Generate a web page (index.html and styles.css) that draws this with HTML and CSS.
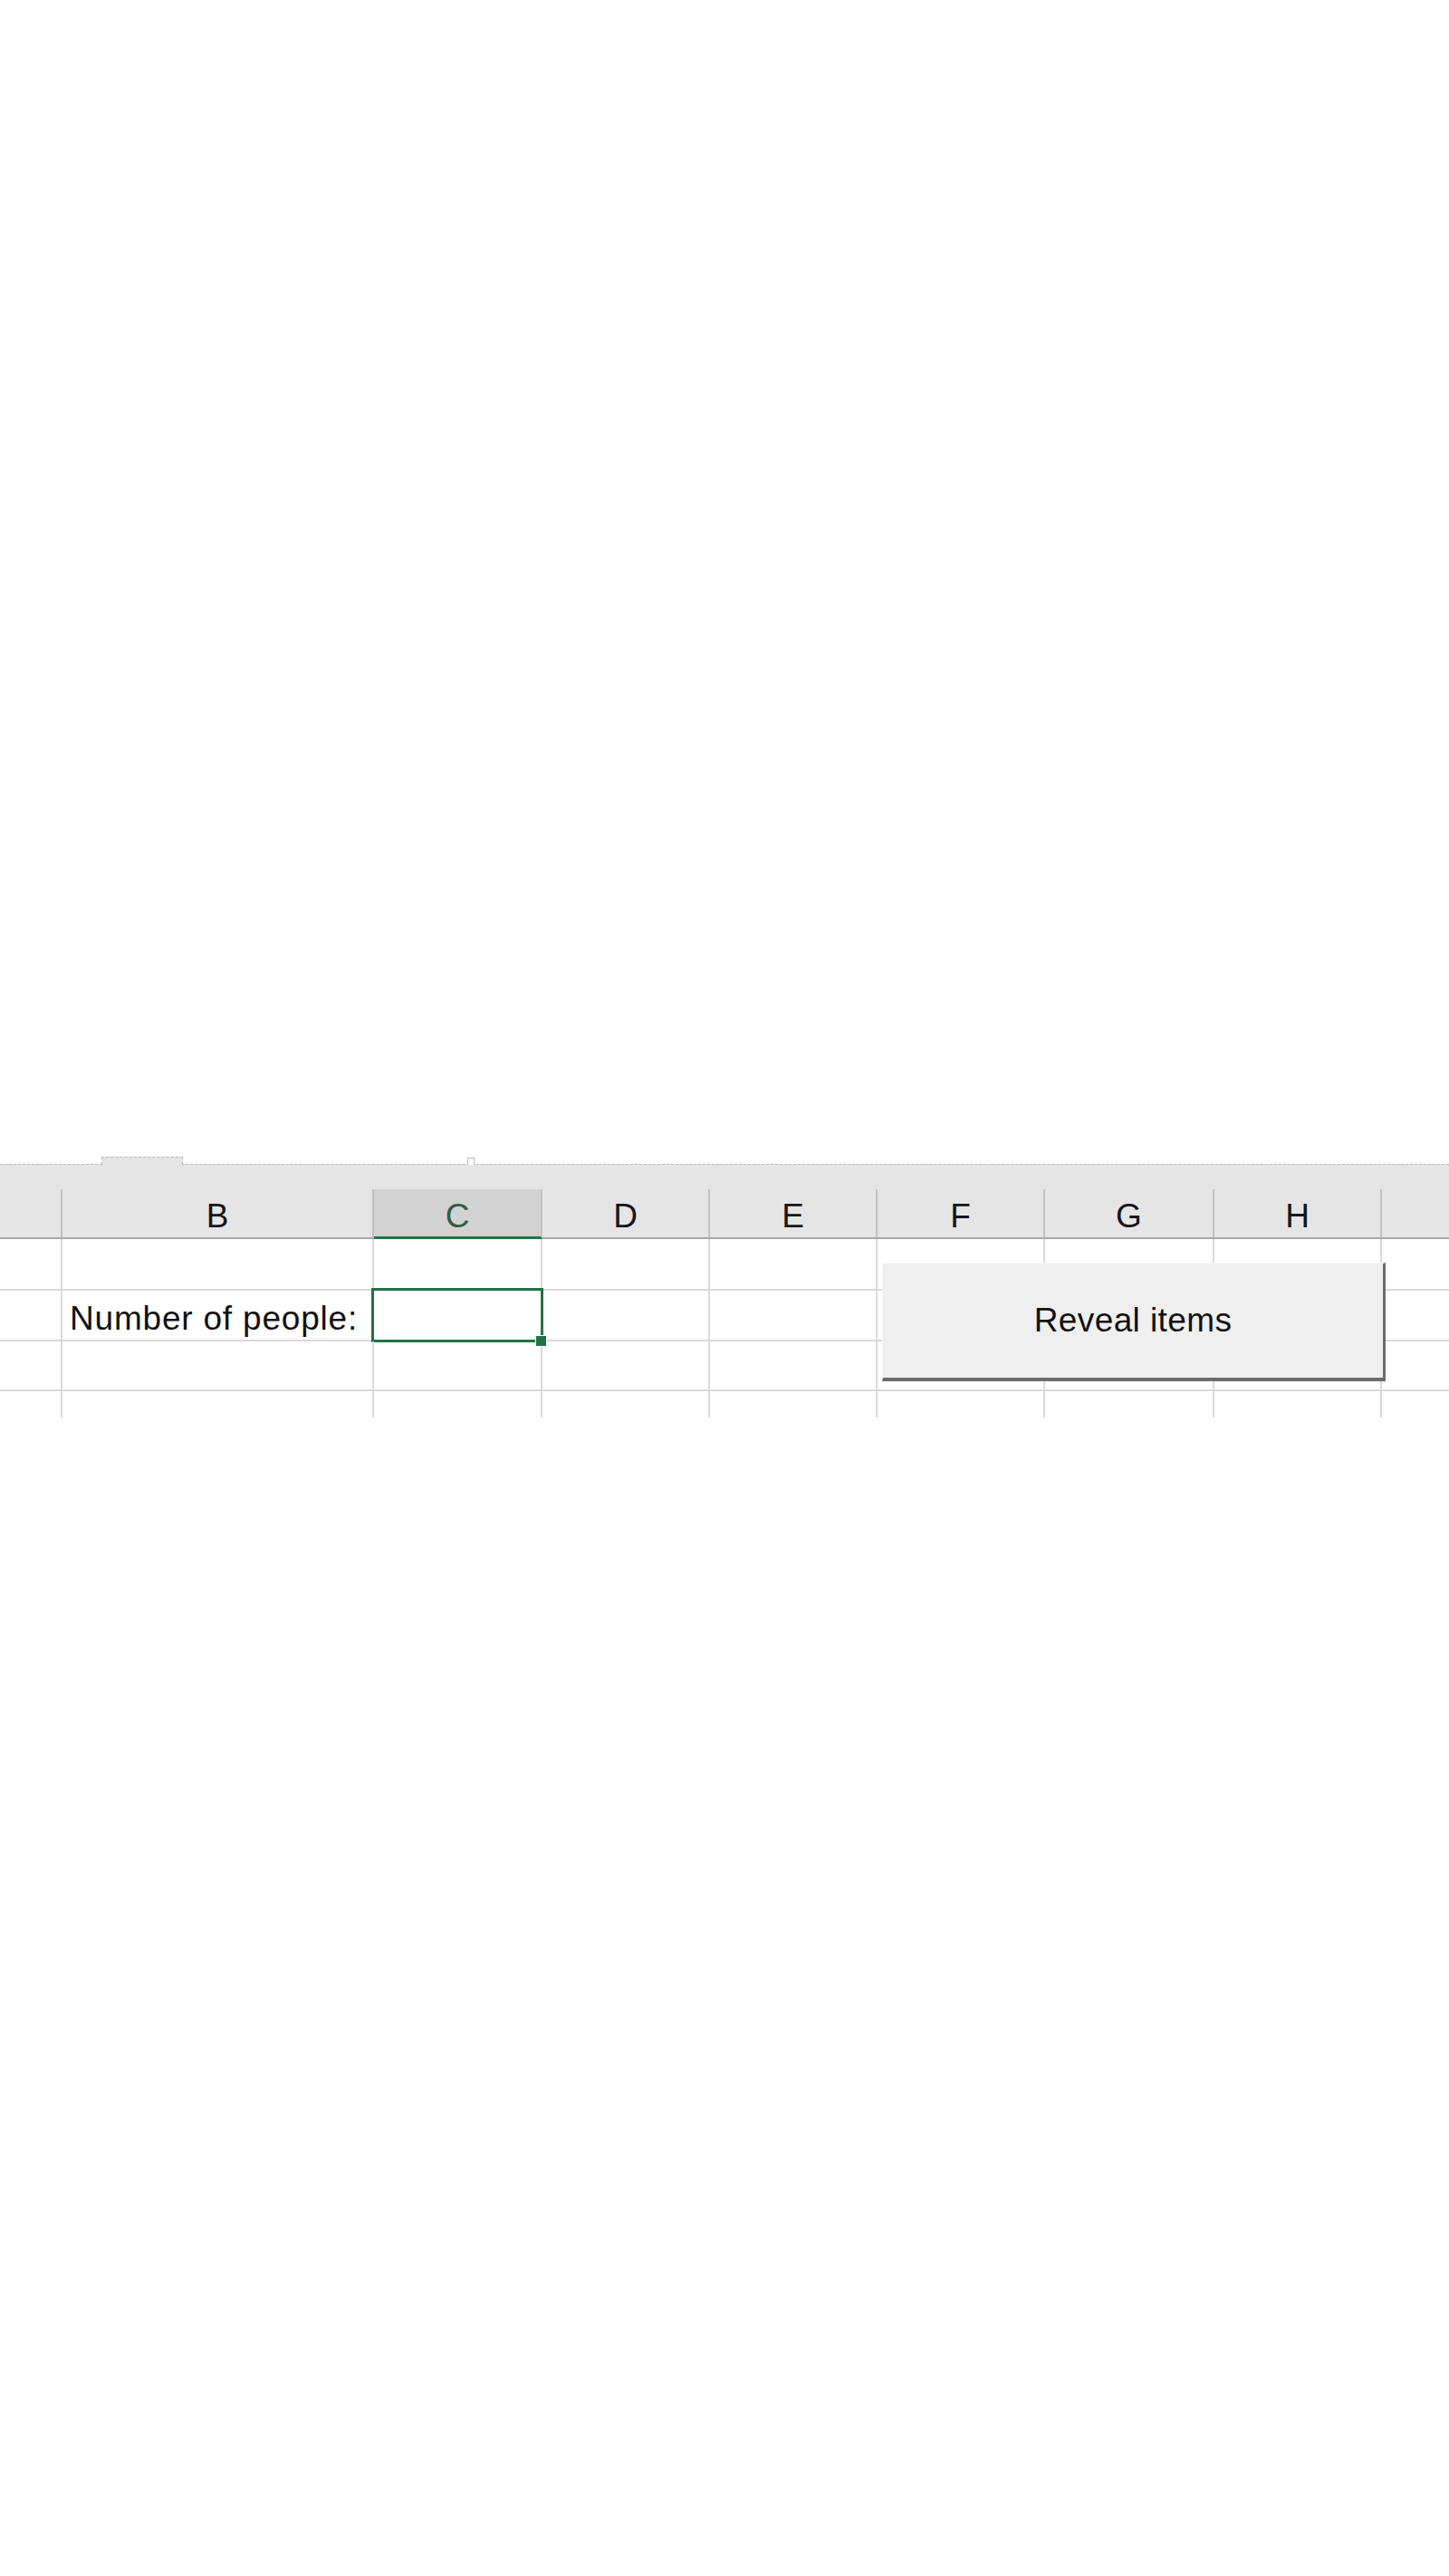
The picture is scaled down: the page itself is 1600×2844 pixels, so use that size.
FILE: index.html
```html
<!DOCTYPE html>
<html lang="en">
<head>
    <meta charset="UTF-8">
    <meta name="viewport" content="width=device-width, initial-scale=1.0">
    <title>Reveal Items Sheet</title>
    <link rel="stylesheet" href="styles.css">
</head>
<body>

    <div class="sheet">

        <!-- Ribbon edge above the column headers -->
        <div class="tabstrip">
            <div class="tab"></div>
            <div class="notch"></div>
        </div>

        <!-- Column headers -->
        <div class="band">
            <div class="cols colheads">
                <div class="colhead"></div>
                <div class="colhead">B</div>
                <div class="colhead active">C</div>
                <div class="colhead">D</div>
                <div class="colhead">E</div>
                <div class="colhead">F</div>
                <div class="colhead">G</div>
                <div class="colhead">H</div>
                <div class="colhead last"></div>
            </div>
        </div>

        <!-- Cells -->
        <div class="cells">
            <div class="cols row r1">
                <div class="cell"></div><div class="cell"></div><div class="cell"></div><div class="cell"></div>
                <div class="cell"></div><div class="cell"></div><div class="cell"></div><div class="cell"></div>
                <div class="cell last"></div>
            </div>
            <div class="cols row r2">
                <div class="cell"></div>
                <div class="cell label">Number of people:</div>
                <div class="cell selected"><span class="handle"></span></div>
                <div class="cell"></div><div class="cell"></div><div class="cell"></div><div class="cell"></div><div class="cell"></div>
                <div class="cell last"></div>
            </div>
            <div class="cols row r3">
                <div class="cell"></div><div class="cell"></div><div class="cell"></div><div class="cell"></div>
                <div class="cell"></div><div class="cell"></div><div class="cell"></div><div class="cell"></div>
                <div class="cell last"></div>
            </div>
            <div class="cols row r4">
                <div class="cell"></div><div class="cell"></div><div class="cell"></div><div class="cell"></div>
                <div class="cell"></div><div class="cell"></div><div class="cell"></div><div class="cell"></div>
                <div class="cell last"></div>
            </div>

            <!-- Form control button floating over the grid -->
            <button class="reveal" type="button">Reveal items</button>
        </div>
    </div>

</body>
</html>
```

FILE: styles.css
```css
/* Page */
body, html {
    margin: 0;
    background-color: #ffffff;
    font-family: "Liberation Sans", Arial, sans-serif;
    color: #1b1b1b;
}

body {
    min-height: 2844px;
}

.sheet {
    padding-top: 1277px;
}

/* Ribbon edge */
.tabstrip {
    display: flex;
    align-items: flex-end;
    height: 8px;
    padding-left: 112px;
}

.tab {
    position: relative; /* paints over the band's dashed top */
    width: 88px;
    height: 8px;
    margin-bottom: -1px;
    background-color: #e5e5e5;
    border: 1px dashed #b9b9b9;
    border-bottom: none;
}

.notch {
    position: relative;
    width: 6px;
    height: 7px;
    margin-left: 314px;
    margin-bottom: -1px;
    background-color: #ffffff;
    border: 1px solid #b9b9b9;
    border-bottom: none;
}

.band {
    background-color: #e5e5e5;
    border-top: 1px dashed #b9b9b9;
    padding-top: 27px;
}

/* Shared column layout */
.cols {
    display: grid;
    grid-template-columns: 69px 344px 186px 185px 185px 185px 187px 185px 1fr;
}

/* Column headers */
.colheads {
    height: 55px;
    box-sizing: border-box;
    border-bottom: 2px solid #a9a9a9;
}

.colhead {
    border-right: 2px solid #c2c2c2;
    text-align: center;
    font-size: 37px;
    line-height: 36px;
    padding-top: 12px;
    color: #161616;
}

.colhead.active {
    background-color: #d2d2d2;
    color: #2d5f46;
    margin-bottom: -2px;
    border-bottom: 3px solid #217346;
}

.colhead.last,
.cell.last {
    border-right: none;
}

/* Cells */
.cells {
    position: relative;
}

.row {
    box-sizing: border-box;
    border-bottom: 2px solid #dadada;
}

.r1 { height: 57px; }
.r2 { height: 56px; }
.r3 { height: 55px; }
.r4 { height: 29px; border-bottom: none; }

.cell {
    position: relative;
    border-right: 2px solid #dadada;
}

.cell.label {
    display: flex;
    align-items: flex-end;
    padding: 0 0 5px 8px;
    font-size: 37px;
    line-height: 37px;
    letter-spacing: 0.8px;
    white-space: nowrap;
    color: #111111;
}

/* Active cell outline */
.cell.selected::after {
    content: "";
    position: absolute;
    top: -3px;
    left: -3px;
    right: -3px;
    bottom: -3px;
    border: 3px solid #217346;
}

.handle {
    position: absolute;
    right: -7px;
    bottom: -8px;
    width: 11px;
    height: 11px;
    background-color: #217346;
    border: 1px solid #ffffff;
    z-index: 1;
}

/* Reveal items button */
.reveal {
    position: absolute;
    top: 26px;
    left: 974px;
    width: 556px;
    height: 131px;
    box-sizing: border-box;
    margin: 0;
    padding: 0;
    background-color: #efefef;
    border-top: 1px solid #f7f7f7;
    border-left: 1px solid #f7f7f7;
    border-right: 3px solid #6c6c6c;
    border-bottom: 4px solid #6c6c6c;
    font-family: "Liberation Sans", Arial, sans-serif;
    font-size: 37px;
    letter-spacing: 0.4px;
    color: #111111;
    cursor: pointer;
}
```
